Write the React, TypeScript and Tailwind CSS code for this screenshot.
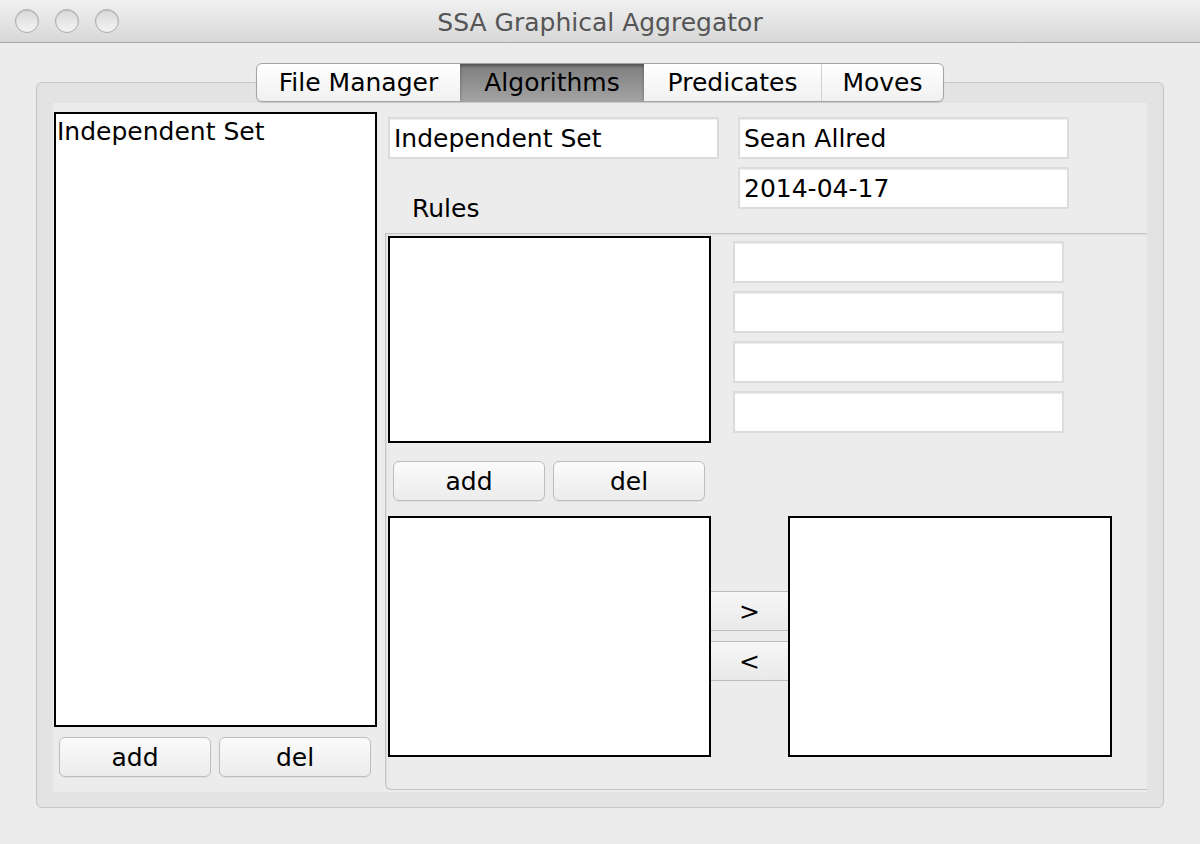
const font = { fontFamily: '"DejaVu Sans", "Liberation Sans", sans-serif' };

function Light() {
  return (
    <div className="w-[24px] h-[24px] rounded-full border border-[#a9a9a9] bg-gradient-to-b from-[#d8d8d8] to-[#f4f4f4] shadow-[inset_0_1px_1px_rgba(0,0,0,0.12)]" />
  );
}

function Btn({ label, className = "" }: { label: string; className?: string }) {
  return (
    <button
      type="button"
      className={
        "h-[40px] w-[152px] rounded-[6px] border border-[#bdbdbd] bg-gradient-to-b from-[#fbfbfb] to-[#ececec] text-[25px] leading-none text-black shadow-[0_1px_0_rgba(0,0,0,0.05)] " +
        className
      }
    >
      {label}
    </button>
  );
}

function Field({ value = "", className = "" }: { value?: string; className?: string }) {
  return (
    <div
      className={
        "h-[42px] w-[331px] border-2 border-[#dcdcdc] bg-white pl-[4px] flex items-center text-[25px] leading-none text-black shadow-[inset_0_1px_1px_rgba(0,0,0,0.08)] " +
        className
      }
    >
      {value}
    </div>
  );
}

function ListBox({ className = "", children }: { className?: string; children?: React.ReactNode }) {
  return <div className={"border-2 border-black bg-white " + className}>{children}</div>;
}

const tabs = [
  { name: "File Manager", w: "w-[203px]" },
  { name: "Algorithms", w: "w-[184px]" },
  { name: "Predicates", w: "w-[177px]" },
  { name: "Moves", w: "w-[122px]" },
];

export default function App() {
  return (
    <div className="w-[1200px] h-[844px] bg-[#ececec] flex flex-col overflow-hidden" style={font}>
      {/* title bar */}
      <div className="relative h-[43px] shrink-0 border-b border-[#a6a6a6] bg-gradient-to-b from-[#f0f0f0] to-[#d8d8d8] flex items-center">
        <div className="absolute left-[15px] top-[9px] flex gap-[16px]">
          <Light />
          <Light />
          <Light />
        </div>
        <div className="w-full text-center text-[25px] leading-none text-[#555555] pt-[2px]">SSA Graphical Aggregator</div>
      </div>

      {/* tab strip */}
      <div className="relative z-10 mt-[20px] flex justify-center">
        <div className="flex h-[39px] rounded-[6px] border border-[#a4a4a4] bg-gradient-to-b from-[#ffffff] to-[#f1f1f1] overflow-hidden shadow-[0_1px_1px_rgba(0,0,0,0.12)]">
          {tabs.map((t, i) => (
            <div
              key={t.name}
              className={
                "flex items-center justify-center text-[25px] leading-none text-black " +
                t.w +
                (t.name === "Algorithms"
                  ? " bg-gradient-to-b from-[#7d7d7d] to-[#a3a3a3] shadow-[inset_0_2px_3px_rgba(0,0,0,0.35)]"
                  : "") +
                (i === 3 ? " border-l border-[#d0d0d0]" : "")
              }
            >
              {t.name}
            </div>
          ))}
        </div>
      </div>

      {/* tabbed panel */}
      <div className="mx-[36px] mt-[-20px] h-[726px] rounded-[6px] border border-[#c6c6c6] bg-[#e3e3e3] pt-[20px] pl-[16px] pr-[16px] pb-[15px]">
        <div className="flex h-full bg-[#ececec]">
          {/* left column */}
          <div className="w-[332px] flex flex-col pt-[9px] pl-[1px]">
            <ListBox className="w-[323px] h-[615px] px-[1px] pt-[3px] text-[25px] leading-[30px]">Independent Set</ListBox>
            <div className="mt-[10px] flex gap-[8px] pl-[5px]">
              <Btn label="add" />
              <Btn label="del" />
            </div>
          </div>

          {/* right column */}
          <div className="flex-1 flex flex-col">
            <div className="flex pt-[14px] pl-[3px] gap-[19px]">
              <Field value="Independent Set" />
              <Field value="Sean Allred" />
            </div>
            <div className="flex pt-[8px] h-[50px]">
              <div className="w-[353px] flex items-end pl-[27px] text-[25px] leading-none text-black translate-y-[12px]">
                Rules
              </div>
              <Field value="2014-04-17" />
            </div>

            {/* rules panel */}
            <div className="mt-[24px] h-[557px] rounded-bl-[6px] border-l border-t border-b border-[#c4c4c4] shadow-[inset_1px_1px_2px_rgba(0,0,0,0.06)] pt-[2px] pl-[2px]">
              <div className="flex">
                <ListBox className="w-[323px] h-[207px]" />
                <div className="ml-[22px] mt-[5px] flex flex-col gap-[8px]">
                  <Field />
                  <Field />
                  <Field />
                  <Field />
                </div>
              </div>
              <div className="mt-[18px] flex gap-[8px] pl-[5px]">
                <Btn label="add" />
                <Btn label="del" />
              </div>
              <div className="mt-[15px] flex">
                <ListBox className="w-[323px] h-[241px]" />
                <div className="w-[77px] pt-[75px] flex flex-col gap-[10px]">
                  <button
                    type="button"
                    className="h-[40px] w-full border-t border-b border-[#bdbdbd] bg-gradient-to-b from-[#f7f7f7] to-[#e9e9e9] text-[25px] text-black leading-none"
                  >
                    &gt;
                  </button>
                  <button
                    type="button"
                    className="h-[40px] w-full border-t border-b border-[#bdbdbd] bg-gradient-to-b from-[#f7f7f7] to-[#e9e9e9] text-[25px] text-black leading-none"
                  >
                    &lt;
                  </button>
                </div>
                <ListBox className="w-[324px] h-[241px]" />
              </div>
            </div>
          </div>
        </div>
      </div>
    </div>
  );
}
